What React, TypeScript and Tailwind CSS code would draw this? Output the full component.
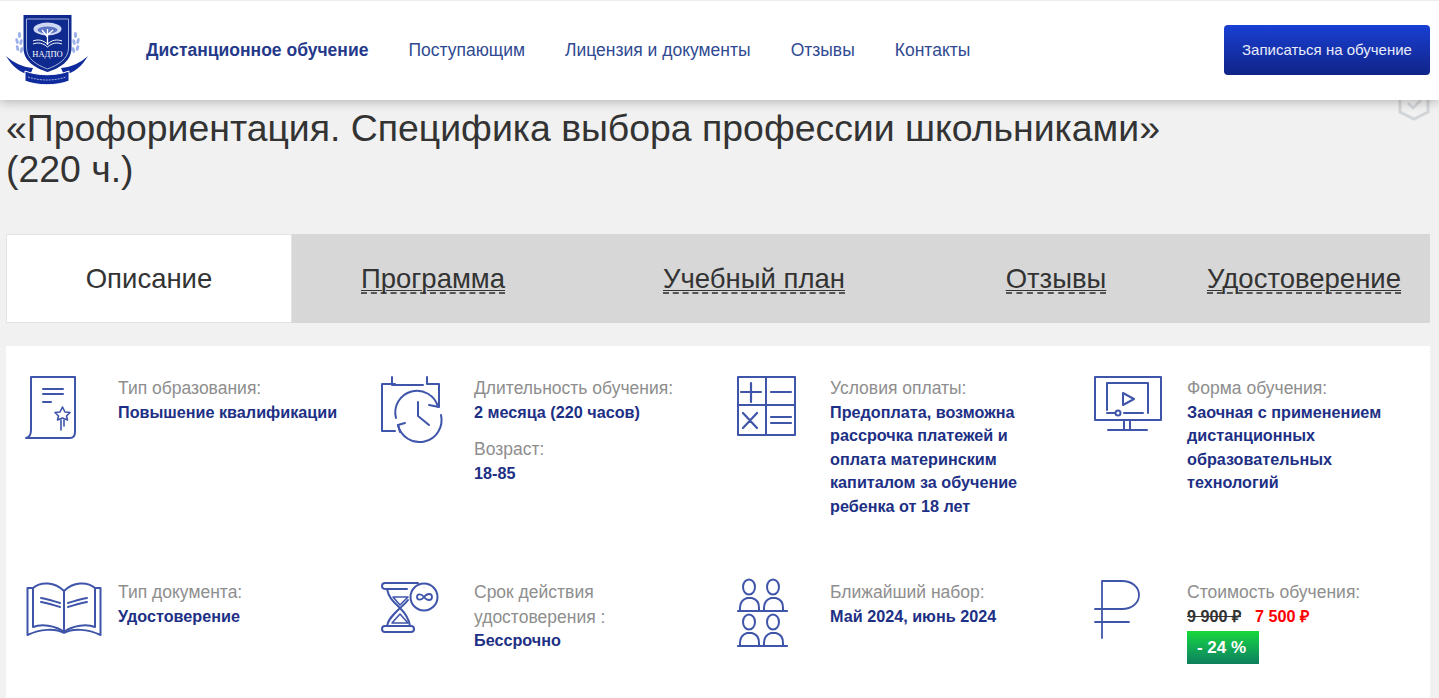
const F = { fontFamily: '"Liberation Sans", Arial, sans-serif' };

function Logo() {
  return (
    <svg width="100" height="100" viewBox="0 0 100 100" className="shrink-0">
      <path d="M6 55 C14 62 22 66 33 67 L30 74 C20 72 12 65 6 55Z" fill="#0e2a9c" />
      <path d="M88 55 C80 62 72 66 61 67 L64 74 C74 72 82 65 88 55Z" fill="#0e2a9c" />
      <path d="M25 70 C38 75 56 75 69 70 L69 80 C56 85 38 85 25 80Z" fill="#0e2a9c" stroke="#fff" strokeWidth="1" />
      <path d="M28 76 C40 80 54 80 66 76" fill="none" stroke="#9fb0e0" strokeWidth="1" strokeDasharray="2 1" />
      <g fill="#9db0ea">
        <ellipse cx="19.5" cy="34" rx="1.6" ry="3" />
        <ellipse cx="17" cy="40" rx="1.5" ry="3" transform="rotate(-15 17 40)" />
        <ellipse cx="21" cy="41" rx="1.5" ry="3" transform="rotate(15 21 41)" />
        <ellipse cx="17.5" cy="47" rx="1.5" ry="3" transform="rotate(-15 17.5 47)" />
        <ellipse cx="21.5" cy="49" rx="1.5" ry="3" transform="rotate(15 21.5 49)" />
        <ellipse cx="75.5" cy="34" rx="1.6" ry="3" />
        <ellipse cx="78" cy="40" rx="1.5" ry="3" transform="rotate(15 78 40)" />
        <ellipse cx="74" cy="41" rx="1.5" ry="3" transform="rotate(-15 74 41)" />
        <ellipse cx="77.5" cy="47" rx="1.5" ry="3" transform="rotate(15 77.5 47)" />
        <ellipse cx="73.5" cy="49" rx="1.5" ry="3" transform="rotate(-15 73.5 49)" />
      </g>
      <path d="M23.5 14 H71.5 V47 C71.5 60 60 67 47.5 71 C35 67 23.5 60 23.5 47Z" fill="#0e2a8f" />
      <path d="M26.5 18 H68.5 V47 C68.5 58 58 64 47.5 68 C37 64 26.5 58 26.5 47Z" fill="none" stroke="#c9d3f0" strokeWidth="0.8" />
      <ellipse cx="47.5" cy="28" rx="14" ry="6.5" fill="#cfd8f2" />
      <ellipse cx="47.5" cy="29" rx="10" ry="3.5" fill="#5d74c4" />
      <path d="M47.5 44 V28 M47.5 36 L42 29 M47.5 34 L53 29" stroke="#fff" strokeWidth="1.3" fill="none" />
      <path d="M33 40 C38 38 43 39 47.5 43 C52 39 57 38 62 40 M33 43 C38 41 43 42 47.5 46 C52 42 57 41 62 43" stroke="#fff" strokeWidth="1" fill="none" />
      <text x="47.5" y="55.5" textAnchor="middle" fontSize="8.5" fill="#fff" fontFamily='"Liberation Serif", serif'>НАДПО</text>
    </svg>
  );
}

const iconProps = {
  width: 80,
  height: 76,
  viewBox: "0 0 80 76",
  fill: "none",
  stroke: "#3f55aa",
  strokeWidth: 2,
  strokeLinecap: "round" as const,
  strokeLinejoin: "round" as const,
  className: "shrink-0",
};

function DocIcon() {
  return (
    <svg {...iconProps}>
      <path d="M6 5 H50 V60 Q50 66 45 66 H1 Q6 65 6 58Z" />
      <path d="M18 17 H38 M18 22 H38 M18 30 H26" />
      <path d="M37.5 35 L40 40 L45 40.5 L41.5 44 L42.5 48 L37.5 46 L32.5 48 L33.5 44 L30 40.5 L35 40Z" strokeWidth="1.6" />
      <path d="M36 48 V58 M39 48 V54" strokeWidth="1.6" />
    </svg>
  );
}
function CalendarIcon() {
  return (
    <svg {...iconProps}>
      <path d="M14 12 H1 V59 H14 M11 5 V13 H42 M46 5 V12 H58 V33" />
      <path d="M15 46 A21.5 21.5 0 0 1 57 35" />
      <path d="M48 33 L58 35 L58 26" />
      <path d="M60 43 A21.5 21.5 0 0 1 17 53" />
      <path d="M24 51 L17 53 L19 60" />
      <path d="M37 30 V44 L48 53" />
    </svg>
  );
}
function CalcIcon() {
  return (
    <svg {...iconProps}>
      <rect x="1" y="5" width="57" height="58" />
      <path d="M29 5 V63 M1 33 H58" />
      <path d="M14 11 V30 M4 20 H24 M34 20 H54" strokeWidth="2.2" />
      <path d="M6 41 L20 56 M20 41 L6 56 M34 45 H54 M34 51 H54" strokeWidth="2.2" />
    </svg>
  );
}
function ScreenIcon() {
  return (
    <svg {...iconProps}>
      <rect x="1" y="5" width="66" height="43" />
      <path d="M13 38 V11 H54 V41 M30 41 H49 M13 41 H21" />
      <circle cx="24" cy="41" r="2.5" />
      <path d="M29 21 L40 27 L29 33Z" />
      <path d="M30 48 V58 M36 48 V58 M14 58 H53" />
    </svg>
  );
}
function BookIcon() {
  return (
    <svg {...iconProps}>
      <path d="M8 12 C16 5 30 6 39 15 V56 C30 49 16 48 8 51Z" />
      <path d="M39 15 C48 6 62 5 70 12 V51 C62 48 48 49 39 56" />
      <path d="M8 12 H2.5 V59 C15 53 30 52 39 57 C48 52 63 53 75.5 59 V12 H70" />
      <path d="M16 22 C22 23 28 25 35 27 M16 26 C22 27 28 29 35 31 M43 27 C50 25 56 23 62 22 M43 31 C50 29 56 27 62 26" />
    </svg>
  );
}
function GlassIcon() {
  return (
    <svg {...iconProps}>
      <path d="M37 7 H4 Q1 7 1 10 Q1 13 5 13 H26" />
      <path d="M6 13 C8 23 14 27 19 32 C13 38 7 43 6 50" />
      <path d="M4 50 H30 Q33 50 33 53 Q33 56 30 56 H4 Q1 56 1 53 Q1 50 4 50Z" />
      <path d="M29 50 C28 43 24 37 19 32 C22 29 25 27 27 24" />
      <path d="M12 21 H27 L19 29Z M19 38 L11 47 H27Z" strokeWidth="1.6" />
      <circle cx="43" cy="21" r="13.5" fill="#fff" />
      <path d="M43 21 C40 17 36 18 36 21 S40 25 43 21 S51 17 51 21 S46 25 43 21Z" strokeWidth="1.8" />
    </svg>
  );
}
function PeopleIcon() {
  return (
    <svg {...iconProps}>
      <ellipse cx="12" cy="11" rx="6" ry="7.5" />
      <path d="M3 35 V32 C3 26 7 23 10 22 H15 C19 23 22 26 22 32 V35" />
      <ellipse cx="36" cy="11" rx="6" ry="7.5" />
      <path d="M27 35 V32 C27 26 31 23 34 22 H39 C43 23 46 26 46 32 V35" />
      <ellipse cx="12" cy="46" rx="6" ry="7.5" />
      <path d="M3 70 V67 C3 61 7 58 10 57 H15 C19 58 22 61 22 67 V70" />
      <ellipse cx="36" cy="46" rx="6" ry="7.5" />
      <path d="M27 70 V67 C27 61 31 58 34 57 H39 C43 58 46 61 46 67 V70" />
      <path d="M1 35 H50 M1 70 H50" strokeWidth="2.2" />
    </svg>
  );
}
function RubleIcon() {
  return (
    <svg {...iconProps} strokeWidth={1.8}>
      <path d="M8 5 V62 M1 46 H35 M1 33 H28 C38 33 45 27 45 19 C45 11 38 5 28 5 H8" />
    </svg>
  );
}

function Item({
  icon,
  children,
}: {
  icon: React.ReactNode;
  children: React.ReactNode;
}) {
  return (
    <div className="flex">
      <div className="w-[93px] shrink-0 -mt-[4px]">{icon}</div>
      <div className="w-[222px]">{children}</div>
    </div>
  );
}
const Label = ({ children }: { children: React.ReactNode }) => (
  <div className="text-[17.5px] leading-[24.5px] text-[#8e8e8e]">{children}</div>
);
const Value = ({ children }: { children: React.ReactNode }) => (
  <div className="text-[16.2px] leading-[23.5px] font-bold text-[#1d3085]">{children}</div>
);

function Tab({ w, children }: { w: string; children: string }) {
  return (
    <div className={`${w} flex items-center justify-center pt-[1px]`}>
      <a className="text-[#333] underline decoration-1 underline-offset-2 border-b-2 border-dashed border-[#555] leading-[27px]">
        {children}
      </a>
    </div>
  );
}

export default function App() {
  return (
    <div style={F} className="relative h-[698px] w-full overflow-hidden bg-[#f1f1f1]">
      <header className="relative z-10 flex h-[100px] items-center border-t border-[#ececec] bg-white pl-0 pr-[9px] shadow-[0_2px_10px_rgba(0,0,0,0.25)]">
        <Logo />
        <nav className="ml-[46px] flex items-center gap-[40px] text-[17.5px] text-[#2f4a92]">
          <a className="font-bold text-[#24398a]">Дистанционное обучение</a>
          <a>Поступающим</a>
          <a>Лицензия и документы</a>
          <a>Отзывы</a>
          <a>Контакты</a>
        </nav>
        <button className="ml-auto -mt-px h-[50px] w-[206px] rounded-[4px] bg-gradient-to-b from-[#1940d4] to-[#102488] text-[15px] text-[#e9ecfb]">
          Записаться на обучение
        </button>
      </header>

      <svg width="32" height="30" viewBox="0 0 32 30" fill="none" stroke="#d3d6d9" strokeWidth="3" className="absolute right-[9px] top-[92px]">
        <path d="M2 4 V20 L16 27 L30 20 V4" />
        <path d="M10 11 L15 16 L23 8" />
      </svg>

      <main className="pl-[6px] pr-[9px]">
        <h1 className="mt-[8px] mb-[44px] w-[1200px] text-[37.4px] font-normal leading-[41px] text-[#333]">
          «Профориентация. Специфика выбора профессии школьниками» (220 ч.)
        </h1>

        <div className="flex h-[89px] bg-[#d7d7d7] text-[27.5px]">
          <div className="flex w-[286px] items-center justify-center border border-[#e3e3e3] bg-white pt-[1px] text-[#333]">
            Описание
          </div>
          <Tab w="w-[282px]">Программа</Tab>
          <Tab w="w-[360px]">Учебный план</Tab>
          <Tab w="w-[244px]">Отзывы</Tab>
          <Tab w="flex-1">Удостоверение</Tab>
        </div>

        <section className="mt-[23px] grid h-[400px] grid-cols-[356px_356px_357px_1fr] content-start gap-y-[62px] bg-white pl-[19px] pt-[30px]">
          <Item icon={<DocIcon />}>
            <Label>Тип образования:</Label>
            <Value>Повышение квалификации</Value>
          </Item>
          <Item icon={<CalendarIcon />}>
            <Label>Длительность обучения:</Label>
            <Value>2 месяца (220 часов)</Value>
            <div className="mt-[13px]">
              <Label>Возраст:</Label>
              <Value>18-85</Value>
            </div>
          </Item>
          <Item icon={<CalcIcon />}>
            <Label>Условия оплаты:</Label>
            <Value>Предоплата, возможна рассрочка платежей и оплата материнским капиталом за обучение ребенка от 18 лет</Value>
          </Item>
          <Item icon={<ScreenIcon />}>
            <Label>Форма обучения:</Label>
            <Value>Заочная с применением дистанционных образовательных технологий</Value>
          </Item>

          <Item icon={<BookIcon />}>
            <Label>Тип документа:</Label>
            <Value>Удостоверение</Value>
          </Item>
          <Item icon={<GlassIcon />}>
            <Label>Срок действия удостоверения :</Label>
            <Value>Бессрочно</Value>
          </Item>
          <Item icon={<PeopleIcon />}>
            <Label>Ближайший набор:</Label>
            <Value>Май 2024, июнь 2024</Value>
          </Item>
          <Item icon={<RubleIcon />}>
            <Label>Стоимость обучения:</Label>
            <Value>
              <div className="flex gap-[14px]">
                <span className="text-[#333] line-through">9 900 ₽</span>
                <span className="text-[#f00]">7 500 ₽</span>
              </div>
            </Value>
            <div className="mt-[3px] flex h-[33px] w-[72px] items-center justify-center bg-gradient-to-b from-[#18d935] to-[#0f7f5c] pr-[3px] text-[17px] font-bold text-white">
              - 24 %
            </div>
          </Item>
        </section>
      </main>
    </div>
  );
}
